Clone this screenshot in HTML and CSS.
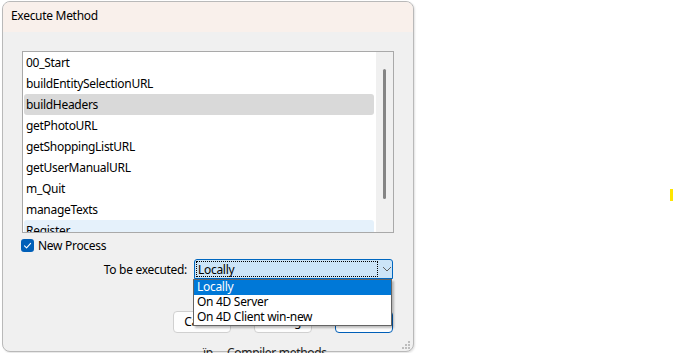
FILE: index.html
```html
<!DOCTYPE html>
<html>
<head>
<meta charset="utf-8">
<link rel="stylesheet" href="styles.css">
</head>
<body>
<div class="desk">
  <div class="bg-text"><span class="bg-icon">ïp</span>Compiler methods</div>
  <div class="dialog">
    <div class="titlebar">Execute Method</div>
    <div class="content">
      <div class="listbox">
        <ul class="rows">
          <li>00_Start</li>
          <li>buildEntitySelectionURL</li>
          <li class="sel">buildHeaders</li>
          <li>getPhotoURL</li>
          <li>getShoppingListURL</li>
          <li>getUserManualURL</li>
          <li>m_Quit</li>
          <li>manageTexts</li>
          <li class="hover">Register</li>
        </ul>
        <div class="vscroll"><div class="thumb"></div></div>
      </div>
      <div class="check">
        <span class="box"><svg width="13" height="13" viewBox="0 0 13 13"><path d="M3.5 6.8 L5.6 8.9 L9.6 4.4" fill="none" stroke="#fff" stroke-width="1.1" stroke-linecap="round" stroke-linejoin="round"/></svg></span>
        <span>New Process</span>
      </div>
      <div class="exec-row">
        <span class="lbl">To be executed:</span>
        <div class="combo">
          <span class="focus">Locally</span>
          <svg class="chev" width="10" height="6" viewBox="0 0 10 6"><path d="M1 1 L5 5 L9 1" fill="none" stroke="#606060" stroke-width="1"/></svg>
        </div>
      </div>
      <div class="buttons">
        <div class="btn">Cancel</div>
        <div class="btn">Debug</div>
        <div class="btn default">Execute</div>
      </div>
    </div>
    <div class="dropdown">
      <div class="opt active">Locally</div>
      <div class="opt">On 4D Server</div>
      <div class="opt">On 4D Client win-new</div>
    </div>
    <svg class="grip" width="8" height="8" viewBox="0 0 8 8">
      <rect x="6" y="0" width="2" height="2" fill="#bdbdbd"/>
      <rect x="3" y="3" width="2" height="2" fill="#bdbdbd"/>
      <rect x="6" y="3" width="2" height="2" fill="#bdbdbd"/>
      <rect x="0" y="6" width="2" height="2" fill="#bdbdbd"/>
      <rect x="3" y="6" width="2" height="2" fill="#bdbdbd"/>
      <rect x="6" y="6" width="2" height="2" fill="#bdbdbd"/>
    </svg>
  </div>
  <div class="mark"></div>
</div>
</body>
</html>
```
FILE: styles.css
```css
* { box-sizing: border-box; }
html, body { margin: 0; padding: 0; background: #fff; }
body {
  font-family: "Noto Sans", "Open Sans", sans-serif;
  font-size: 12px;
  letter-spacing: -0.3px;
  color: #000;
}
.desk {
  position: relative;
  width: 675px;
  height: 353px;
  overflow: hidden;
}
.bg-text {
  position: absolute;
  left: 203px;
  top: 344px;
  font-size: 12px;
  color: #222;
  z-index: 2;
  white-space: nowrap;
}
.bg-icon {
  display: inline-block;
  width: 24px;
}
.dialog {
  position: absolute;
  left: 2px;
  top: 1px;
  width: 412px;
  height: 351px;
  border: 1px solid #b9b9b9;
  border-radius: 8px;
  background: #f0f0f0;
  overflow: hidden;
  box-shadow: 1px 1px 2px rgba(0,0,0,0.12);
}
.titlebar {
  height: 30px;
  line-height: 27px;
  padding-left: 8px;
  background: #f9f0eb;
  font-size: 12px;
}
.content {
  padding: 19px 19px 0 19px;
}
.listbox {
  display: flex;
  height: 182px;
  border: 1px solid #a9a9a9;
  background: #fff;
}
.rows {
  flex: 1;
  list-style: none;
  margin: 0;
  padding: 0 2px 0 1px;
  overflow: hidden;
}
.rows li {
  height: 21px;
  line-height: 21px;
  padding-left: 2px;
  border-radius: 3px;
  white-space: nowrap;
}
.rows li.sel { background: #d9d9d9; }
.rows li.hover { background: #e5f1fb; }
.vscroll {
  width: 17px;
  background: #f0f0f0;
  padding: 17px 0 0 7px;
}
.thumb {
  width: 3px;
  height: 130px;
  background: #858585;
  border-radius: 2px;
}
.check {
  display: flex;
  align-items: center;
  gap: 4px;
  margin: 5px 0 0 -1px;
  height: 14px;
}
.box {
  width: 13px;
  height: 13px;
  border-radius: 3px;
  background: #005fb8;
  display: flex;
}
.exec-row {
  display: flex;
  justify-content: flex-end;
  align-items: center;
  gap: 7px;
  margin-top: 7px;
  padding-right: 1px;
}
.combo {
  width: 199px;
  height: 20px;
  border: 1px solid #0067c0;
  border-radius: 3px 3px 0 0;
  background: #cce4f7;
  display: flex;
  align-items: center;
  padding: 0 0 0 1px;
}
.focus {
  width: 182px;
  height: 16px;
  line-height: 15px;
  padding-left: 1px;
  border: 1px dotted #000;
}
.chev { margin-left: 4px; }
.buttons {
  display: flex;
  justify-content: flex-end;
  gap: 23px;
  margin-top: 32px;
  padding-right: 1px;
}
.btn {
  width: 58px;
  height: 22px;
  line-height: 20px;
  text-align: center;
  background: #fdfdfd;
  border: 1px solid #d0d0d0;
  border-radius: 4px;
}
.btn.default {
  border: 1px solid #005fb8;
}
.dropdown {
  position: absolute;
  left: 190px;
  top: 277px;
  width: 199px;
  height: 47px;
  background: #fff;
  border: 1px solid #646464;
  box-shadow: 2px 2px 2px rgba(0,0,0,0.25);
}
.opt {
  height: 15px;
  line-height: 14px;
  padding-left: 3px;
  white-space: nowrap;
}
.opt.active { background: #0078d7; color: #fff; }
.grip {
  position: absolute;
  right: 3px;
  bottom: 2px;
}
.mark {
  position: absolute;
  left: 670px;
  top: 189px;
  width: 3px;
  height: 12px;
  background: #ffe600;
}
```
